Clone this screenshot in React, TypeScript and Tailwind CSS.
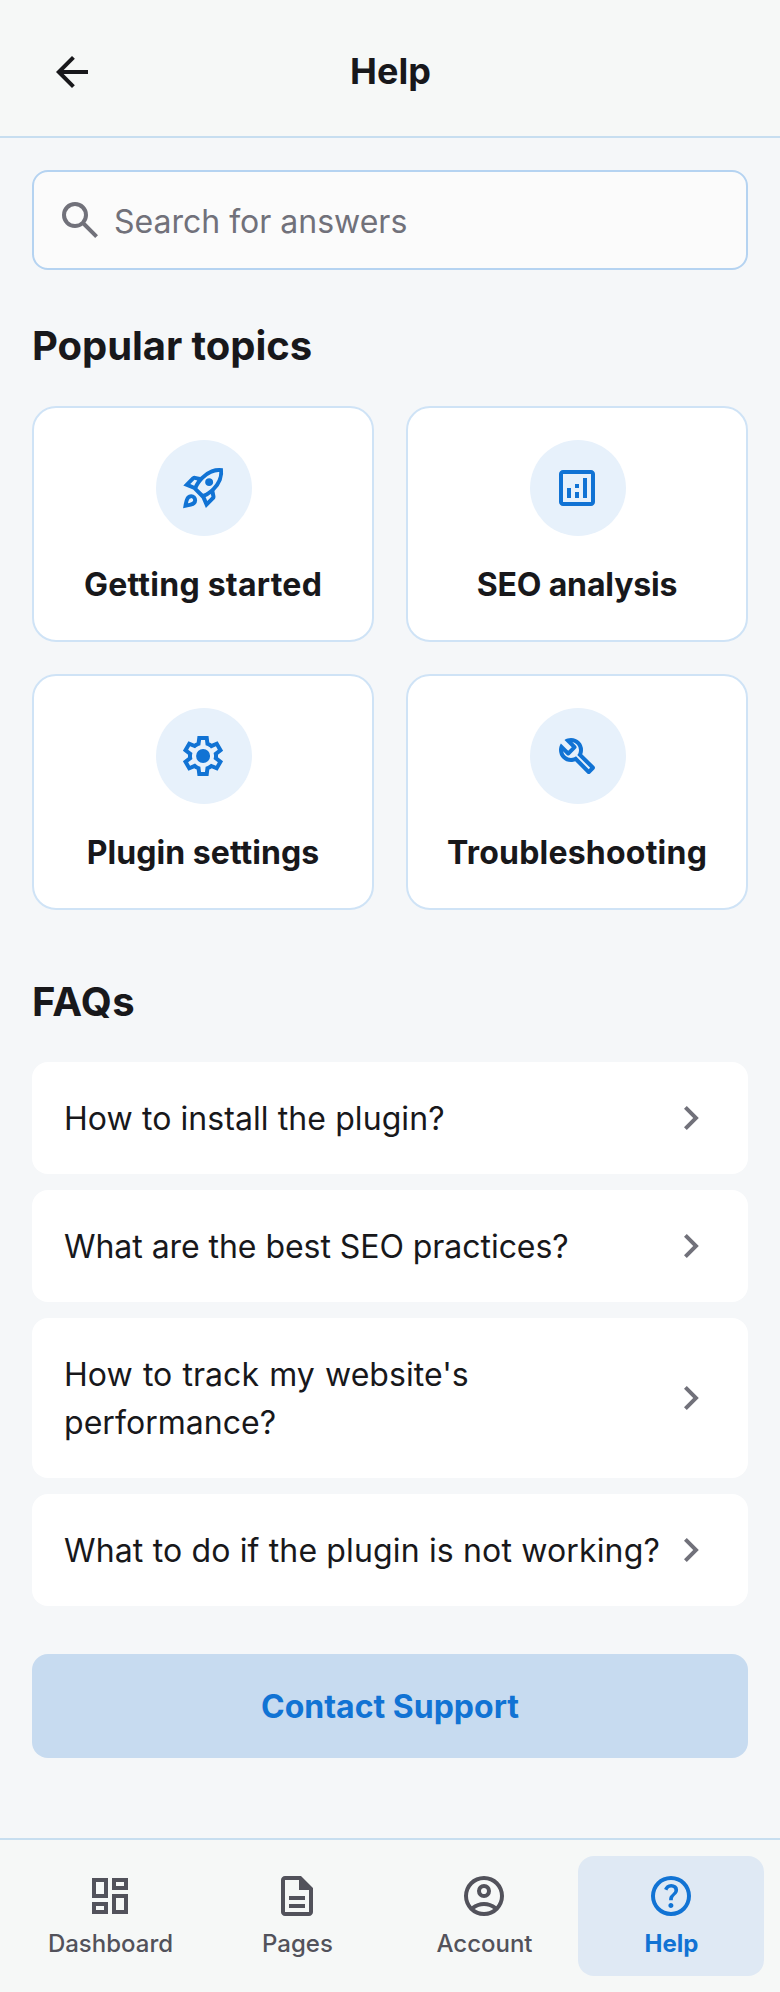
import React from "react";

const paths = {
  back: "m313-440 224 224-57 56-320-320 320-320 57 56-224 224h487v80H313Z",
  search:
    "M784-120 532-372q-30 24-69 38t-83 14q-109 0-184.5-75.5T120-580q0-109 75.5-184.5T380-840q109 0 184.5 75.5T640-580q0 44-14 83t-38 69l252 252-56 56ZM380-400q75 0 127.5-52.5T560-580q0-75-52.5-127.5T380-760q-75 0-127.5 52.5T200-580q0 75 52.5 127.5T380-400Z",
  rocket:
    "m226-559 78 33q14-28 29-54t33-52l-56-11-84 84Zm142 83 114 113q42-16 90-49t90-75q70-70 109.5-155.5T806-800q-72-5-158 34.5T492-656q-42 42-75 90t-49 90Zm178-65q-23-23-23-56.5t23-56.5q23-23 57-23t57 23q23 23 23 56.5T660-541q-23 23-57 23t-57-23Zm19 321 84-84-11-56q-26 18-52 32.5T532-299l33 79Zm313-653q19 121-23.5 235.5T708-419l20 99q4 20-2 39t-20 33L538-80l-84-197-171-171-197-84 167-168q14-14 33.5-20t39.5-2l99 20q104-104 218-147t235-24ZM157-321q35-35 85.5-35.5T328-322q35 35 34.5 85.5T327-151q-25 25-83.5 43T82-76q14-103 32-161.5t43-83.5Zm57 56q-10 10-20 36.5T180-175q27-4 53.5-13.5T270-208q12-12 13-29t-11-29q-12-12-29-11.5T214-265Z",
  analytics:
    "M280-280h80v-200h-80v200Zm320 0h80v-400h-80v400Zm-160 0h80v-120h-80v120Zm0-200h80v-80h-80v80ZM200-120q-33 0-56.5-23.5T120-200v-560q0-33 23.5-56.5T200-840h560q33 0 56.5 23.5T840-760v560q0 33-23.5 56.5T760-120H200Zm0-80h560v-560H200v560Z",
  settings:
    "m370-80-16-128q-13-5-24.5-12T307-235l-119 50L78-375l103-78q-1-7-1-13.5v-27q0-6.5 1-13.5L78-585l110-190 119 50q11-8 23-15t24-12l16-128h220l16 128q13 5 24.5 12t22.5 15l119-50 110 190-103 78q1 7 1 13.5v27q0 6.5-2 13.5l103 78-110 190-118-50q-11 8-23 15t-24 12L590-80H370Zm70-80h79l14-106q31-8 57.5-23.5T639-327l99 41 39-68-86-65q5-14 7-29.5t2-31.5q0-16-2-31.5t-7-29.5l86-65-39-68-99 42q-22-23-48.5-38.5T533-694l-13-106h-79l-14 106q-31 8-57.5 23.5T321-633l-99-41-39 68 86 64q-5 15-7 30t-2 32q0 16 2 31t7 30l-86 65 39 68 99-42q22 23 48.5 38.5T427-266l13 106Zm42-180q58 0 99-41t41-99q0-58-41-99t-99-41q-59 0-99.5 41T342-480q0 58 40.5 99t99.5 41Z",
  build:
    "M686-132 444-376q-20 8-40.5 12t-43.5 4q-100 0-170-70t-70-170q0-36 10-68.5t28-61.5l146 146 72-72-146-146q29-18 61.5-28t68.5-10q100 0 170 70t70 170q0 23-4 43.5T584-516l244 242q12 12 12 29t-12 29l-84 84q-12 12-29 12t-29-12Zm29-85 27-27-256-256q18-20 26-46.5t8-53.5q0-60-38.5-104.5T386-758l74 74q12 12 12 28t-12 28L332-500q-12 12-28 12t-28-12l-74-74q9 57 53.5 95.5T360-440q26 0 53-8t47-25l255 256Z",
  chevron: "M504-480 320-664l56-56 240 240-240 240-56-56 184-184Z",
  dashboard:
    "M520-600v-240h320v240H520ZM120-440v-400h320v400H120Zm400 320v-400h320v400H520Zm-400 0v-240h320v240H120Zm80-400h160v-240H200v240Zm400 320h160v-240H600v240Zm0-480h160v-80H600v80ZM200-200h160v-80H200v80Z",
  description:
    "M320-240h320v-80H320v80Zm0-160h320v-80H320v80ZM240-80q-33 0-56.5-23.5T160-160v-640q0-33 23.5-56.5T240-880h320l240 240v480q0 33-23.5 56.5T720-80H240Zm280-520v-200H240v640h480v-440H520Z",
  account:
    "M234-276q51-39 114-61.5T480-360q69 0 132 22.5T726-276q35-41 54.5-93T800-480q0-133-93.5-226.5T480-800q-133 0-226.5 93.5T160-480q0 59 19.5 111t54.5 93Zm246-164q-59 0-99.5-40.5T340-580q0-59 40.5-99.5T480-720q59 0 99.5 40.5T620-580q0 59-40.5 99.5T480-440Zm0 360q-83 0-156-31.5T197-197q-54-54-85.5-127T80-480q0-83 31.5-156T197-763q54-54 127-85.5T480-880q83 0 156 31.5T763-763q54 54 85.5 127T880-480q0 83-31.5 156T763-197q-54 54-127 85.5T480-80Zm0-80q53 0 100-15.5t86-44.5q-39-29-86-44.5T480-280q-53 0-100 15.5T294-220q39 29 86 44.5T480-160Zm0-360q26 0 43-17t17-43q0-26-17-43t-43-17q-26 0-43 17t-17 43q0 26 17 43t43 17Z",
  help: "M478-240q21 0 35.5-14.5T528-290q0-21-14.5-35.5T478-340q-21 0-35.5 14.5T428-290q0 21 14.5 35.5T478-240Zm-36-154h74q0-33 7.5-52t42.5-52q26-26 41-49.5t15-56.5q0-56-41-86t-97-30q-57 0-92.5 30T342-618l66 26q5-18 22.5-39t53.5-21q32 0 48 17.5t16 38.5q0 20-12 37.5T506-526q-44 39-54 59t-10 73Zm38 314q-83 0-156-31.5T197-197q-54-54-85.5-127T80-480q0-83 31.5-156T197-763q54-54 127-85.5T480-880q83 0 156 31.5T763-763q54 54 85.5 127T880-480q0 83-31.5 156T763-197q-54 54-127 85.5T480-80Zm0-80q134 0 227-93t93-227q0-134-93-227t-227-93q-134 0-227 93t-93 227q0 134 93 227t227 93Z",
};

type IconName = keyof typeof paths;

function Icon({ name, className = "" }: { name: IconName; className?: string }) {
  return (
    <svg viewBox="0 -960 960 960" fill="currentColor" aria-hidden="true" className={`size-12 shrink-0 ${className}`}>
      <path d={paths[name]} />
    </svg>
  );
}

const topics: { icon: IconName; label: string; tracking: string }[] = [
  { icon: "rocket", label: "Getting started", tracking: "tracking-[0.25px]" },
  { icon: "analytics", label: "SEO analysis", tracking: "tracking-[-0.15px]" },
  { icon: "settings", label: "Plugin settings", tracking: "tracking-[0.04px]" },
  { icon: "build", label: "Troubleshooting", tracking: "tracking-[0.22px]" },
];

const faqs: { question: string; tracking: string }[] = [
  { question: "How to install the plugin?", tracking: "tracking-[0.08px]" },
  { question: "What are the best SEO practices?", tracking: "tracking-[-0.05px]" },
  { question: "How to track my website's performance?", tracking: "tracking-[0.05px] [word-spacing:1.1px]" },
  { question: "What to do if the plugin is not working?", tracking: "tracking-[0.15px]" },
];

const tabs: { icon: IconName; label: string; active?: boolean }[] = [
  { icon: "dashboard", label: "Dashboard" },
  { icon: "description", label: "Pages" },
  { icon: "account", label: "Account" },
  { icon: "help", label: "Help", active: true },
];

export default function App() {
  return (
    <div className="flex h-[1992px] w-[780px] flex-col bg-[#f5f7f9] font-['Inter',sans-serif] text-[#18181b]">
      <header className="flex h-[138px] items-center border-b-2 border-[#c7def0] bg-[#f6f8f7] px-8 pt-2">
        <button className="flex size-20 items-center justify-center" aria-label="Back">
          <Icon name="back" />
        </button>
        <h1 className="flex-1 pr-[79px] pb-0.5 text-center text-[36px] leading-[44px] font-bold">Help</h1>
      </header>

      <main className="flex-1 px-8 pt-8">
        <label className="flex h-[100px] items-center gap-2.5 rounded-2xl border-2 border-[#b5d3f1] bg-[#fbfbfb] px-[22px] text-[#71717a]">
          <Icon name="search" />
          <input
            type="text"
            placeholder="Search for answers"
            className="h-[50px] flex-1 bg-transparent pt-0.5 text-[32px] leading-[48px] outline-none placeholder:text-[#71717a]"
          />
        </label>

        <h2 className="mt-12 text-[40px] leading-[56px] font-bold tracking-[-0.06px]">Popular topics</h2>
        <div className="mt-8 grid grid-cols-2 gap-8">
          {topics.map((t) => (
            <button
              key={t.label}
              className="flex h-[236px] flex-col items-center rounded-3xl border-2 border-[#cfe3f6] bg-white py-8"
            >
              <span className="ml-0.5 flex size-24 items-center justify-center rounded-full bg-[#e7f1fb] pr-0.5 text-[#1173d4]">
                <Icon name={t.icon} />
              </span>
              <span className={`mt-[25px] -mb-px text-[32px] leading-[48px] font-bold ${t.tracking}`}>{t.label}</span>
            </button>
          ))}
        </div>

        <h2 className="mt-16 text-[40px] leading-[56px] font-bold tracking-[0.4px]">FAQs</h2>
        <div className="mt-8 flex flex-col gap-4">
          {faqs.map((f) => (
            <button key={f.question} className="flex items-center justify-between rounded-2xl bg-white p-8 text-left">
              <span className={`mt-px -mb-px text-[32px] leading-[48px] ${f.tracking}`}>{f.question}</span>
              <Icon name="chevron" className="text-[#71717a]" />
            </button>
          ))}
        </div>

        <button className="mt-12 h-[104px] w-full rounded-2xl bg-[#c7dbf0] pt-0.5 text-[32px] leading-[48px] font-bold text-[#1173d4]">
          Contact Support
        </button>
      </main>

      <nav className="grid h-[154px] grid-cols-4 border-t-2 border-[#c7def0] bg-[#f6f8f7] p-4">
        {tabs.map((t) => (
          <a
            key={t.label}
            className={`ml-px flex flex-col items-center gap-2 rounded-2xl py-4 text-2xl leading-8 ${
              t.active ? "bg-[#dfe9f4] font-bold text-[#1173d4]" : "font-medium text-[#52525b]"
            }`}
          >
            <Icon name={t.icon} />
            <span className="first-of-type:pl-px">{t.label}</span>
          </a>
        ))}
      </nav>
    </div>
  );
}
